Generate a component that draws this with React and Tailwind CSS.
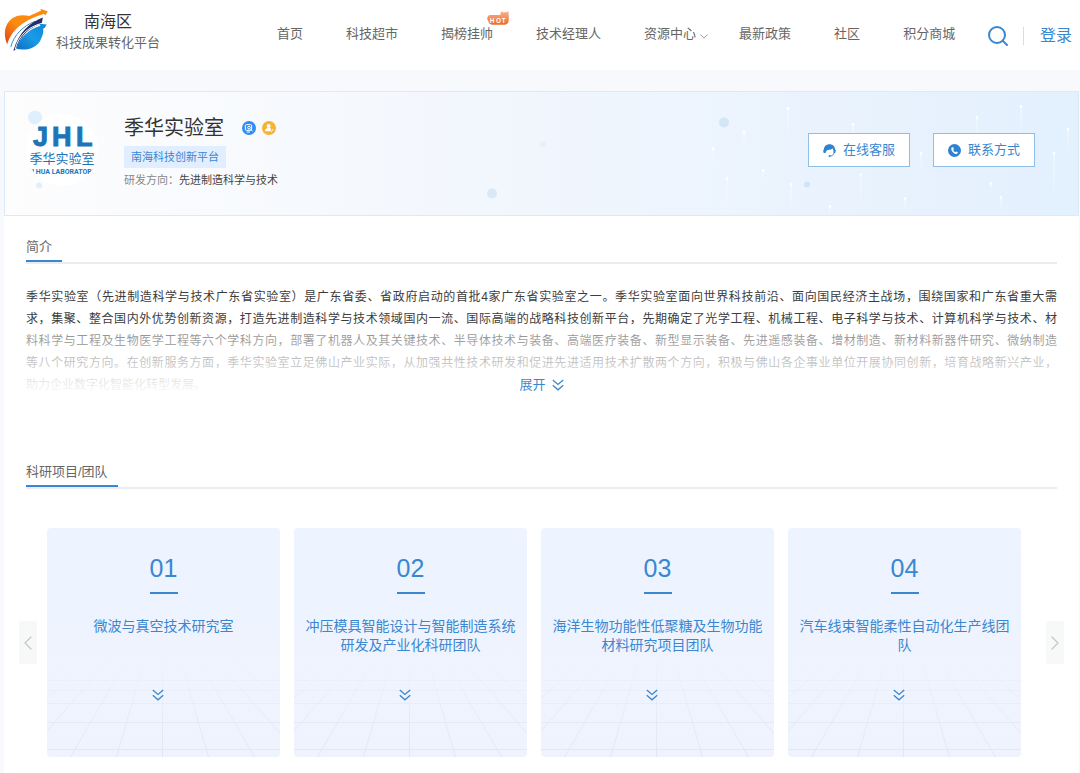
import { useState } from 'react';
import { ChevronLeft, ChevronRight, Search } from 'lucide-react';

const navItems = [
    { label: '首页' },
    { label: '科技超市' },
    { label: '揭榜挂帅', hot: true },
    { label: '技术经理人' },
    { label: '资源中心', menu: true },
    { label: '最新政策' },
    { label: '社区' },
    { label: '积分商城' },
];

const introLines = [
    '季华实验室（先进制造科学与技术广东省实验室）是广东省委、省政府启动的首批4家广东省实验室之一。季华实验室面向世界科技前沿、面向国民经济主战场，围绕国家和广东省重大需',
    '求，集聚、整合国内外优势创新资源，打造先进制造科学与技术领域国内一流、国际高端的战略科技创新平台，先期确定了光学工程、机械工程、电子科学与技术、计算机科学与技术、材',
    '料科学与工程及生物医学工程等六个学科方向，部署了机器人及其关键技术、半导体技术与装备、高端医疗装备、新型显示装备、先进遥感装备、增材制造、新材料新器件研究、微纳制造',
    '等八个研究方向。在创新服务方面，季华实验室立足佛山产业实际，从加强共性技术研发和促进先进适用技术扩散两个方向，积极与佛山各企事业单位开展协同创新，培育战略新兴产业，',
    '助力企业数字化智能化转型发展。',
];

const teams = [
    { no: '01', name: '微波与真空技术研究室' },
    { no: '02', name: '冲压模具智能设计与智能制造系统研发及产业化科研团队' },
    { no: '03', name: '海洋生物功能性低聚糖及生物功能材料研究项目团队' },
    { no: '04', name: '汽车线束智能柔性自动化生产线团队' },
];

// [x, y, length] of the light trails in the banner
const trails = [
    [783, 17, 34], [848, 33, 24], [1016, 15, 36], [972, 26, 24], [1063, 38, 24],
    [1049, 62, 50], [916, 62, 20], [856, 83, 30], [786, 93, 30], [758, 79, 12],
    [722, 87, 30], [708, 57, 18], [739, 41, 14], [825, 115, 9], [900, 107, 14],
    [996, 106, 17], [986, 92, 8],
];

const SiteLogo = () => (
    <svg viewBox="10 26 136 134" className="size-11 shrink-0" aria-hidden="true">
        <defs>
            <linearGradient id="logoOrange" x1="1" y1="0" x2="0" y2="1">
                <stop offset="0" stopColor="#ff8a0c" />
                <stop offset="0.6" stopColor="#fb8a14" />
                <stop offset="1" stopColor="#e0400f" />
            </linearGradient>
            <linearGradient id="logoBlue" x1="1" y1="0" x2="0" y2="1">
                <stop offset="0" stopColor="#0a86d8" />
                <stop offset="0.5" stopColor="#1b9be6" />
                <stop offset="1" stopColor="#0c6fc0" />
            </linearGradient>
        </defs>
        <path fill="url(#logoOrange)" d="M20 137C8 112 9 75 37 56C54 45 74 47 88 50L125 33L122 27L145 35L138 48L134 43C88 58 36 82 20 137Z" />
        <path fill="none" stroke="#3d86c6" strokeWidth="3" d="M31 146C40 108 70 80 106 66" />
        <path fill="#25306b" d="M130 54C92 68 56 98 39 157C44 156 46 152 50 146C62 108 92 84 127 72Z" />
        <path fill="none" stroke="#fff" strokeWidth="3" d="M45 152C54 112 82 84 128 72" />
        <path fill="url(#logoBlue)" d="M142 76L119 74L123 80C88 90 58 116 48 151C74 158 108 151 122 126C130 110 133 98 131 89L136 86Z" />
    </svg>
);

const HotBadge = () => (
    <svg viewBox="0 0 66 42" className="absolute -top-3 -right-4 h-[14px] w-[22px]" role="img" aria-label="HOT">
        <defs>
            <linearGradient id="hot" x1="0" y1="0" x2="0" y2="1">
                <stop offset="0" stopColor="#f9b48c" />
                <stop offset="1" stopColor="#ee6a2c" />
            </linearGradient>
        </defs>
        <path fill="url(#hot)" d="M10 12H40C40 6 42 3 46 1C47 5 50 6 53 3C56 5 59 3 64 0C65 10 66 20 65 30C64 38 58 41 52 41H16C8 41 5 36 4 30C0 26 0 22 2 18C4 14 6 12 10 12Z" />
        <text x="8 27 44" y="35" fill="#fff" fontSize="19" fontWeight="700" fontFamily="Liberation Sans, sans-serif">HOT</text>
    </svg>
);

const LabLogo = () => (
    <div className="size-[72px] shrink-0 overflow-hidden rounded-full bg-white">
        <svg viewBox="0 0 72 72" className="size-full" role="img" aria-label="季华实验室 JI HUA LABORATORY">
            <g fill="#1b75b8">
                <text x="7 26 50" y="32" fontSize="27" fontWeight="700" stroke="#1b75b8" fontFamily="Liberation Sans, sans-serif">JHL</text>
                <text x="36" y="49" textAnchor="middle" fontSize="13" fontFamily="Liberation Sans, Noto Sans CJK SC, sans-serif">季华实验室</text>
                <text x="36" y="60" textAnchor="middle" fontSize="7" fontWeight="700" fontFamily="Roboto, sans-serif">JI HUA LABORATORY</text>
            </g>
        </svg>
    </div>
);

const BannerArt = () => (
    <svg viewBox="0 0 1073 124" preserveAspectRatio="xMidYMid slice" className="absolute inset-0 size-full" aria-hidden="true">
        <defs>
            <linearGradient id="trail" x1="0" y1="0" x2="0" y2="1">
                <stop offset="0" stopColor="#fff" stopOpacity="0.8" />
                <stop offset="1" stopColor="#fff" stopOpacity="0" />
            </linearGradient>
        </defs>
        <circle cx="30" cy="26" r="7" fill="#e0effe" />
        <circle cx="34" cy="94" r="3" fill="#e0effe" />
        <circle cx="487" cy="102" r="5" fill="#d7e9f7" />
        <circle cx="538" cy="53" r="3" fill="#e4f1fd" />
        <circle cx="719" cy="31" r="5" fill="#d3e6f7" />
        <circle cx="802" cy="93" r="3" fill="#d0e4f6" />
        {trails.map(([x, y, len]) => (
            <g key={`${x}-${y}`}>
                <rect x={x - 0.5} y={y} width="1" height={len} fill="url(#trail)" />
                <circle cx={x} cy={y} r="1.4" fill="#fff" fillOpacity="0.9" />
            </g>
        ))}
    </svg>
);

const CertBadge = () => (
    <svg viewBox="0 0 42 42" className="size-[14px]" role="img" aria-label="企业认证">
        <circle cx="21" cy="21" r="21" fill="#2f8cf5" />
        <rect x="10" y="11" width="19" height="17" rx="3" fill="none" stroke="#fff" strokeWidth="3" />
        <circle cx="21" cy="20" r="4" fill="none" stroke="#fff" strokeWidth="3" />
        <path d="M25 24L32 31M14 33H24" stroke="#fff" strokeWidth="3" />
    </svg>
);

const UserBadge = () => (
    <svg viewBox="0 0 42 42" className="size-[14px]" role="img" aria-label="个人认证">
        <circle cx="21" cy="21" r="21" fill="#f7b334" />
        <circle cx="20" cy="15" r="6" fill="#fff" />
        <path d="M9 31C9 24 14 21 20 21C24 21 26 22 28 24L24 31Z" fill="#fff" />
        <path d="M24 28L28 32L34 24" fill="none" stroke="#fff" strokeWidth="3" />
    </svg>
);

const ServiceIcon = () => (
    <svg viewBox="0 0 40 40" className="size-[13px]" aria-hidden="true">
        <path fill="#2f82cf" d="M20 1C10 1 3 8 3 16C0 17 0 27 4 28H8C9 22 12 18 18 18C23 18 27 16 29 13C32 17 33 22 32 28H36C40 27 40 17 37 16C37 8 30 1 20 1Z" />
        <path fill="none" stroke="#2f82cf" strokeWidth="3" d="M34 28C32 34 28 37 21 37" />
        <circle cx="20" cy="37" r="3" fill="#2f82cf" />
    </svg>
);

const PhoneIcon = () => (
    <svg viewBox="0 0 40 40" className="size-[13px]" aria-hidden="true">
        <circle cx="20" cy="20" r="20" fill="#2f82cf" />
        <path fill="#fff" d="M13 10L17 11L18 16L16 18C17 21 19 24 22 25L25 23L30 25L30 28C28 31 24 31 21 30C15 27 10 21 10 14C10 12 11 11 13 10Z" />
    </svg>
);

const DoubleDown = () => (
    <svg viewBox="0 0 12 12" className="size-3" fill="none" stroke="currentColor" strokeWidth="1.3" aria-hidden="true">
        <path d="M0.8 1L6 5.4L11.2 1M0.8 6.2L6 10.8L11.2 6.2" />
    </svg>
);

const MenuArrow = () => (
    <svg viewBox="0 0 8 5" className="mt-1 h-[5px] w-2" fill="none" stroke="#999" aria-hidden="true">
        <path d="M0.4 0.5L4 4.2L7.6 0.5" />
    </svg>
);

const SectionTitle = ({ children }) => (
    <div className="flex border-b-2 border-[#ebecf1]">
        <h2 className="h-[30px] border-b-2 border-[#3a87d0] pr-[10px] text-[13px] leading-[30px] text-[#666]">{children}</h2>
    </div>
);

const CardFloor = () => (
    <svg viewBox="0 0 233 229" preserveAspectRatio="none" className="absolute inset-0 size-full" aria-hidden="true">
        <defs>
            <linearGradient id="floor" gradientUnits="userSpaceOnUse" x1="0" y1="128" x2="0" y2="229">
                <stop offset="0" stopColor="#e0e7f4" stopOpacity="0" />
                <stop offset="0.6" stopColor="#e0e7f4" stopOpacity="0.7" />
                <stop offset="1" stopColor="#e0e7f4" />
            </linearGradient>
        </defs>
        <g fill="url(#floor)">
            {[-6, -5, -4, -3, -2, -1, 0, 1, 2, 3, 4, 5, 6].map((n) => {
                const top = 115 + n * 17;
                const bottom = 115 + n * 46;
                return <path key={n} d={`M${top} 129H${top + 1}L${bottom + 1} 229H${bottom}Z`} />;
            })}
            {[152, 162, 175, 194, 221].map((y) => (
                <rect key={y} x="0" y={y} width="233" height="1" />
            ))}
        </g>
    </svg>
);

const TeamCard = ({ no, name }) => (
    <li className="relative h-[229px] overflow-hidden rounded bg-gradient-to-b from-[#edf4ff] to-[#eff3fe] text-[#3a87d0]">
        <CardFloor />
        <div className="relative flex h-full flex-col items-center px-2 pt-6">
            <span className="font-['Liberation_Sans',sans-serif] text-[25px] leading-8">{no}</span>
            <span className="mt-2 h-[2px] w-7 bg-[#3a87d0]"></span>
            <h3 className="mt-[23px] h-[60px] text-center text-sm leading-[19px]">{name}</h3>
            <button type="button" aria-label={`展开${name}`} className="mt-3 mr-3">
                <DoubleDown />
            </button>
        </div>
    </li>
);

export default function App() {
    const [expanded, setExpanded] = useState(false);

    return (
        <div className="min-h-screen bg-[#f8f9fc] font-['Liberation_Sans','Noto_Sans_CJK_SC',sans-serif]">
            <header className="flex h-[70px] items-start bg-white pr-2 pl-1">
                <a href="#" className="flex shrink-0 items-start gap-2 pt-2">
                    <SiteLogo />
                    <span className="flex flex-col text-center">
                        <span className="text-base leading-7 text-[#333]">南海区</span>
                        <span className="text-[13px] leading-[14px] text-[#666]">科技成果转化平台</span>
                    </span>
                </a>

                <nav className="ml-[117px] flex shrink-0 gap-[43px] pt-[23px] text-[13px] leading-[22px] text-[#666]">
                    {navItems.map((item) => (
                        <a key={item.label} href="#" className={`relative flex items-center gap-1 ${item.menu ? '-mr-3' : ''}`}>
                            {item.label}
                            {item.menu && <MenuArrow />}
                            {item.hot && <HotBadge />}
                        </a>
                    ))}
                </nav>

                <div className="ml-auto flex shrink-0 items-center pt-6 text-[#3a87d0]">
                    <button type="button" aria-label="搜索">
                        <Search size={24} strokeWidth={2} />
                    </button>
                    <span className="ml-[13px] h-[18px] w-px bg-[#cfdfee]"></span>
                    <a href="#" className="ml-4 text-base leading-[22px]">登录</a>
                </div>
            </header>

            <main className="pt-[21px] pr-[1px] pl-1">
                <section className="relative overflow-hidden border border-[#dbeaf6] bg-gradient-to-r from-[#fdfdfd] via-[#f1f6fd] to-[#e3f0fd]">
                    <BannerArt />
                    <div className="relative flex items-start pt-[22px] pr-[43px] pb-[27px] pl-[21px]">
                        <LabLogo />
                        <div className="mt-[2px] ml-[26px]">
                            <div className="flex items-center">
                                <h1 className="text-xl leading-6 text-[#333]">季华实验室</h1>
                                <span className="ml-[18px] flex gap-[6px]">
                                    <CertBadge />
                                    <UserBadge />
                                </span>
                            </div>
                            <p className="mt-[6px] w-fit bg-[#e1eeff] px-[7px] text-[11px] leading-[22px] text-[#3a87d0]">南海科技创新平台</p>
                            <p className="mt-1 text-[11px] leading-4 text-[#444]">
                                <span className="text-[#888]">研发方向：</span>先进制造科学与技术
                            </p>
                        </div>
                        <div className="mt-[19px] ml-auto flex gap-[23px] text-[13px] text-[#3a87d0]">
                            <button type="button" className="flex h-[34px] w-[102px] items-center justify-center gap-[7px] border border-[#8fbfe8] bg-white">
                                <ServiceIcon />
                                在线客服
                            </button>
                            <button type="button" className="flex h-[34px] w-[102px] items-center justify-center gap-[7px] border border-[#8fbfe8] bg-white">
                                <PhoneIcon />
                                联系方式
                            </button>
                        </div>
                    </div>
                </section>

                <div className="bg-white pt-4 pb-4">
                    <section className="px-[22px]">
                        <SectionTitle>简介</SectionTitle>
                        <div className="relative mt-[22px]">
                            <p className="text-xs leading-[22px] text-[#3c3c3c]">
                                {introLines.map((line, i) => (
                                    <span key={line} className={i < introLines.length - 1 ? 'block text-justify [text-align-last:justify]' : 'block'}>
                                        {line}
                                    </span>
                                ))}
                            </p>
                            {!expanded && (
                                <div className="absolute inset-x-0 bottom-0 flex h-[68px] items-end justify-center bg-gradient-to-b from-white/40 to-white">
                                    <button
                                        type="button"
                                        onClick={() => setExpanded(true)}
                                        className="flex items-center gap-[6px] text-[13px] leading-[22px] text-[#3a87d0]"
                                    >
                                        展开
                                        <DoubleDown />
                                    </button>
                                </div>
                            )}
                        </div>
                    </section>

                    <section className="mt-[61px]">
                        <div className="px-[22px]">
                            <SectionTitle>科研项目/团队</SectionTitle>
                        </div>
                        <div className="mt-[39px] flex items-center px-[15px]">
                            <button type="button" aria-label="上一页" className="flex h-[43px] w-[18px] shrink-0 items-center justify-center rounded-xs bg-[#f7f9f9] text-[#c4c6ca]">
                                <ChevronLeft size={24} strokeWidth={1.3} className="shrink-0" />
                            </button>
                            <ul className="mr-[25px] ml-[10px] grid flex-1 grid-cols-4 gap-[14px]">
                                {teams.map((team) => (
                                    <TeamCard key={team.no} {...team} />
                                ))}
                            </ul>
                            <button type="button" aria-label="下一页" className="flex h-[43px] w-[18px] shrink-0 items-center justify-center rounded-xs bg-[#f7f9f9] text-[#c4c6ca]">
                                <ChevronRight size={24} strokeWidth={1.3} className="shrink-0" />
                            </button>
                        </div>
                    </section>
                </div>
            </main>
        </div>
    );
}
